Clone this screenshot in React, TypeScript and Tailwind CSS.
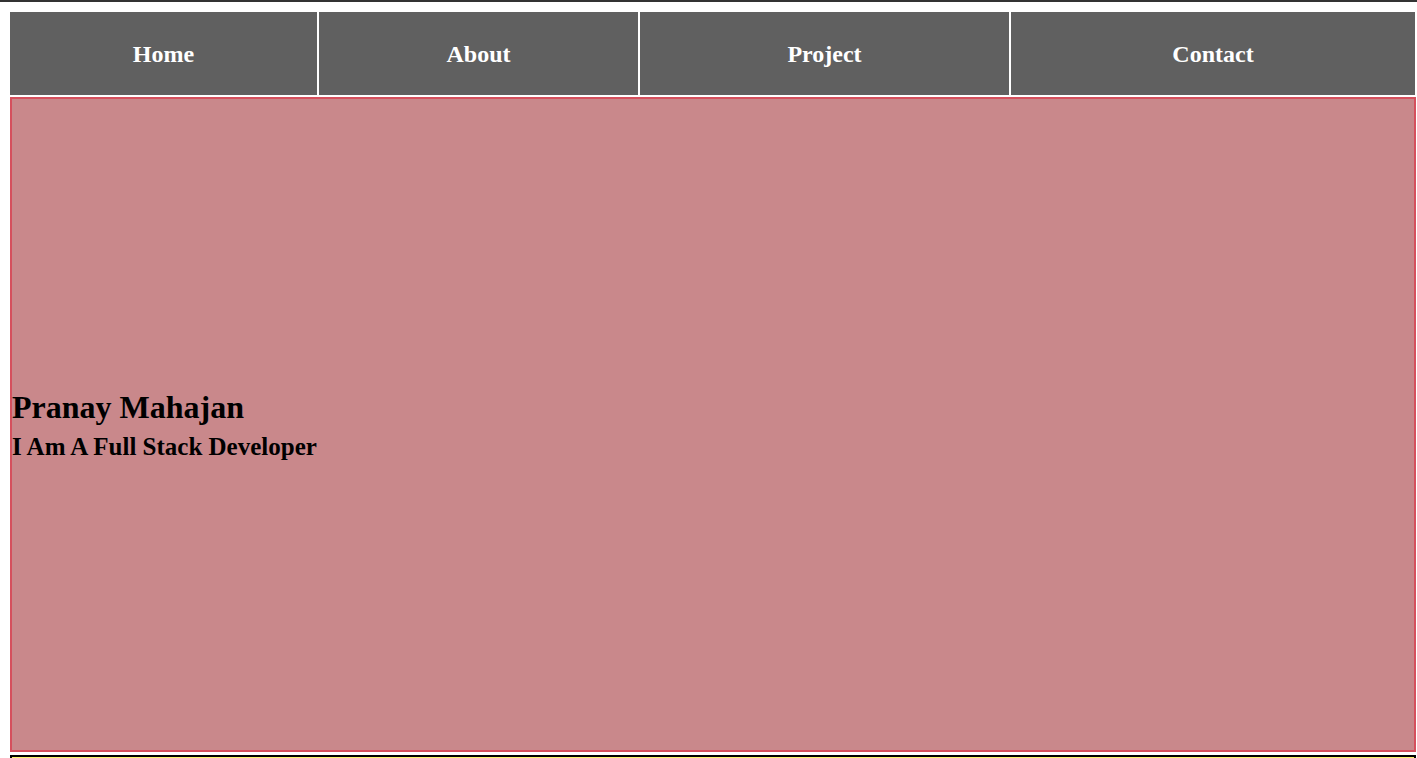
import React from "react";

export default function App() {
  const serif = { fontFamily: '"Liberation Serif", "Times New Roman", serif' };
  return (
    <div className="w-[1417px] h-[758px] overflow-hidden bg-white" style={serif}>
      <div className="h-[2px] bg-[#333333]" />
      <div className="pl-[10px] pr-[1px] pt-[10px]">
        <nav className="flex gap-[2px] h-[83px] mr-[1px]">
          <div className="w-[307px] bg-[#606060] flex items-center justify-center text-white font-bold text-[24px]">Home</div>
          <div className="w-[319px] bg-[#606060] flex items-center justify-center text-white font-bold text-[24px]">About</div>
          <div className="w-[369px] bg-[#606060] flex items-center justify-center text-white font-bold text-[24px]">Project</div>
          <div className="flex-1 bg-[#606060] flex items-center justify-center text-white font-bold text-[24px]">Contact</div>
        </nav>
        <section className="mt-[2px] h-[655px] border-2 border-[#d5505d] bg-[#c9888b] flex flex-col justify-center pt-[1px]">
          <h1 className="font-bold text-[32px] leading-[37px] text-black">Pranay Mahajan</h1>
          <h2 className="mt-[7px] font-bold text-[25px] leading-[28px] text-black">I Am A Full Stack Developer</h2>
        </section>
        <div className="mt-[3px] h-[40px] border-2 border-black bg-[#fbf46c]" />
      </div>
    </div>
  );
}
